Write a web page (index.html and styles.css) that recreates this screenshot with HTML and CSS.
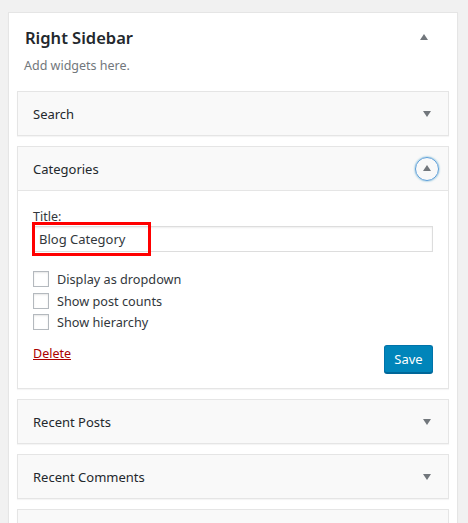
FILE: index.html
```html
<!DOCTYPE html>
<html>
<head>
<meta charset="utf-8">
<link rel="stylesheet" href="styles.css">
</head>
<body>
<div class="sidebar">
  <div class="sidebar-head">
    <h2 class="sidebar-title">Right Sidebar</h2>
    <span class="arrow arrow-up"></span>
  </div>
  <p class="sidebar-desc">Add widgets here.</p>

  <div class="widgets">
    <div class="widget">
      <div class="widget-top">
        <h3 class="widget-title">Search</h3>
        <span class="arrow arrow-down"></span>
      </div>
    </div>

    <div class="widget open">
      <div class="widget-top">
        <h3 class="widget-title">Categories</h3>
        <span class="toggle-focus"><span class="arrow arrow-up"></span></span>
      </div>
      <div class="widget-inside">
        <label class="field-label">Title:</label>
        <div class="field-wrap">
          <div class="text-input">Blog Category</div>
          <span class="highlight"></span>
        </div>
        <div class="checks">
          <div class="check-row"><span class="checkbox"></span><span class="check-label">Display as dropdown</span></div>
          <div class="check-row"><span class="checkbox"></span><span class="check-label">Show post counts</span></div>
          <div class="check-row"><span class="checkbox"></span><span class="check-label">Show hierarchy</span></div>
        </div>
        <div class="actions">
          <a class="delete-link">Delete</a>
          <span class="save-btn">Save</span>
        </div>
      </div>
    </div>

    <div class="widget">
      <div class="widget-top">
        <h3 class="widget-title">Recent Posts</h3>
        <span class="arrow arrow-down"></span>
      </div>
    </div>

    <div class="widget">
      <div class="widget-top">
        <h3 class="widget-title">Recent Comments</h3>
        <span class="arrow arrow-down"></span>
      </div>
    </div>

    <div class="widget">
      <div class="widget-top">
        <h3 class="widget-title">&nbsp;</h3>
      </div>
    </div>
  </div>
</div>
</body>
</html>
```

FILE: styles.css
```css
html, body {
  margin: 0;
  padding: 0;
  height: 100%;
  overflow: hidden;
}
body {
  background: #f1f1f1;
  font-family: "Noto Sans", "Open Sans", sans-serif;
  color: #23282d;
  padding: 12px 10px 0 8px;
  box-sizing: border-box;
}
.sidebar {
  background: #fff;
  border: 1px solid #e5e5e5;
  box-shadow: 0 1px 1px rgba(0,0,0,.04);
  width: 450px;
  box-sizing: border-box;
  padding: 13px 8px 0 8px;
  min-height: 600px;
}
.sidebar-head {
  display: flex;
  align-items: center;
  justify-content: space-between;
  padding: 0 21px 0 8px;
  height: 24px;
}
.sidebar-title {
  margin: 0;
  font-size: 16.5px;
  line-height: 24px;
  font-weight: 600;
  color: #23282d;
}
.sidebar-desc {
  margin: 6px 0 15px 7px;
  font-size: 12.5px;
  line-height: 20px;
  color: #72777c;
}
.widgets {
  display: flex;
  flex-direction: column;
  gap: 10px;
}
.widget {
  background: #f9f9f9;
  border: 1px solid #e5e5e5;
  box-shadow: 0 1px 1px rgba(0,0,0,.04);
}
.widget-top {
  height: 43px;
  display: flex;
  align-items: center;
  justify-content: space-between;
  padding: 0 17px 0 15px;
}
.widget-title {
  margin: 0;
  font-size: 13px;
  font-weight: 400;
  color: #23282d;
}
.arrow {
  width: 0;
  height: 0;
  border-left: 4.5px solid transparent;
  border-right: 4.5px solid transparent;
  display: block;
}
.arrow-down {
  border-top: 6px solid #72777c;
}
.arrow-up {
  border-bottom: 6px solid #72777c;
}
.sidebar-head .arrow-up {
  margin-top: -2px;
}
.toggle-focus {
  width: 22px;
  height: 22px;
  border-radius: 50%;
  border: 1.5px solid #5b9dd9;
  box-shadow: 0 0 2px rgba(30,140,190,.8);
  display: flex;
  align-items: center;
  justify-content: center;
  margin-right: -8px;
}
.toggle-focus .arrow-up {
  margin-top: -2px;
}
.widget.open .widget-top {
  border-bottom: 1px solid #e5e5e5;
}
.widget-inside {
  background: #fff;
  padding: 17px 15px 15px 15px;
}
.field-label {
  display: block;
  font-size: 12.5px;
  line-height: 18px;
  color: #32373c;
}
.field-wrap {
  position: relative;
}
.text-input {
  height: 26px;
  box-sizing: border-box;
  border: 1px solid #ddd;
  box-shadow: inset 0 1px 2px rgba(0,0,0,.07);
  padding: 0 5px;
  font-size: 13px;
  line-height: 24px;
  color: #32373c;
}
.highlight {
  position: absolute;
  left: -1px;
  top: -4px;
  width: 119px;
  height: 34px;
  box-sizing: border-box;
  border: 3px solid #ff0000;
}
.checks {
  margin-top: 19px;
  display: flex;
  flex-direction: column;
  gap: 5.5px;
}
.check-row {
  display: flex;
  align-items: center;
  height: 16px;
}
.checkbox {
  width: 16px;
  height: 16px;
  box-sizing: border-box;
  border: 1px solid #b4b9be;
  background: #fff;
  box-shadow: inset 0 1px 2px rgba(0,0,0,.1);
  margin-right: 8px;
}
.check-label {
  font-size: 12.7px;
  color: #32373c;
}
.actions {
  margin-top: 15px;
  display: flex;
  justify-content: space-between;
  align-items: flex-start;
}
.delete-link {
  font-size: 12.5px;
  line-height: 18px;
  color: #a00;
  text-decoration: underline;
}
.save-btn {
  height: 28px;
  width: 49px;
  box-sizing: border-box;
  background: #0085ba;
  border: 1px solid #0073aa;
  border-bottom-color: #006799;
  border-radius: 3px;
  box-shadow: 0 1px 0 #006799;
  color: #fff;
  font-size: 13px;
  display: flex;
  align-items: center;
  justify-content: center;
}
```
